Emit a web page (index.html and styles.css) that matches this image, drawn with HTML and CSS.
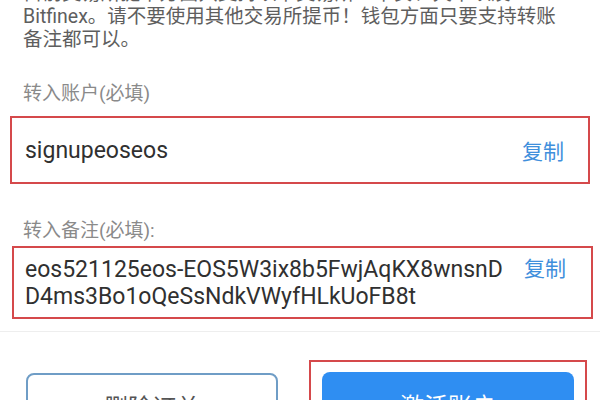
FILE: index.html
```html
<!DOCTYPE html>
<html lang="zh-CN">
<head>
<meta charset="utf-8">
<title>转账信息</title>
<link rel="stylesheet" href="styles.css">
</head>
<body>
<div class="page">
  <p class="notice">目前交易所提币方面只支持以下交易所：币安、火币以及<br>Bitfinex。请不要使用其他交易所提币！钱包方面只要支持转账<br>备注都可以。</p>

  <div class="label label-first">转入账户(必填)</div>
  <div class="field field-account">
    <span class="value">signupeoseos</span>
    <span class="copy">复制</span>
  </div>

  <div class="label label-second">转入备注(必填):</div>
  <div class="field field-memo">
    <span class="value value-memo">eos521125eos-EOS5W3ix8b5FwjAqKX8wnsnDD4ms3Bo1oQeSsNdkVWyfHLkUoFB8t</span>
    <span class="copy copy-top">复制</span>
  </div>

  <div class="divider"></div>

  <div class="actions">
    <button class="btn btn-outline">删除订单</button>
    <div class="highlight">
      <button class="btn btn-primary">激活账户</button>
    </div>
  </div>
</div>
</body>
</html>
```

FILE: styles.css
```css
html, body {
  margin: 0;
  padding: 0;
  background: #ffffff;
}

body {
  font-family: Roboto, "Noto Sans CJK SC", "Noto Sans", sans-serif;
  overflow: hidden;
}

.page {
  width: 600px;
}

.notice {
  margin: -18px 0 0 0;
  padding: 0 23px;
  font-size: 19.5px;
  line-height: 23px;
  color: #5e5e5e;
  white-space: nowrap;
}

.label {
  padding: 0 23px;
  font-size: 19px;
  line-height: 24px;
  color: #8a8a8a;
}

.label-first {
  margin-top: 31px;
}

.label-second {
  margin-top: 35px;
}

.field {
  display: flex;
  align-items: center;
  box-sizing: border-box;
  border: 2px solid #d5494b;
  background: #ffffff;
}

.field-account {
  margin: 10px 10px 0 10px;
  height: 68px;
  padding: 0 24px 0 13px;
}

.field-memo {
  margin: 3px 7px 0 12px;
  height: 73px;
  padding: 0 25px 0 11px;
  align-items: flex-start;
}

.value {
  flex: 1;
  font-size: 23px;
  color: #303030;
}

.value-memo {
  flex: none;
  width: 490px;
  font-size: 23px;
  line-height: 27px;
  padding-top: 8px;
  word-break: break-all;
}

.copy {
  font-size: 21px;
  color: #3f8fdc;
  margin-left: auto;
}

.copy-top {
  line-height: 27px;
  padding-top: 8px;
}

.divider {
  margin-top: 12px;
  height: 1px;
  background: #eeeeee;
}

.actions {
  display: flex;
  align-items: flex-start;
  padding: 0 13px 0 26px;
  margin-top: 28px;
  gap: 31px;
}

.btn {
  font-family: Roboto, "Noto Sans CJK SC", sans-serif;
  font-size: 24px;
  height: 64px;
  border-radius: 8px;
  box-sizing: border-box;
  cursor: pointer;
}

.btn-outline {
  margin-top: 13px;
  width: 252px;
  background: #ffffff;
  border: 2px solid #6f9dc6;
  color: #555555;
}

.highlight {
  box-sizing: border-box;
  width: 278px;
  padding: 10px 11px 10px 11px;
  border: 2px solid #d5494b;
}

.btn-primary {
  display: block;
  width: 100%;
  background: #2f8ef2;
  border: none;
  color: #ffffff;
}
```
